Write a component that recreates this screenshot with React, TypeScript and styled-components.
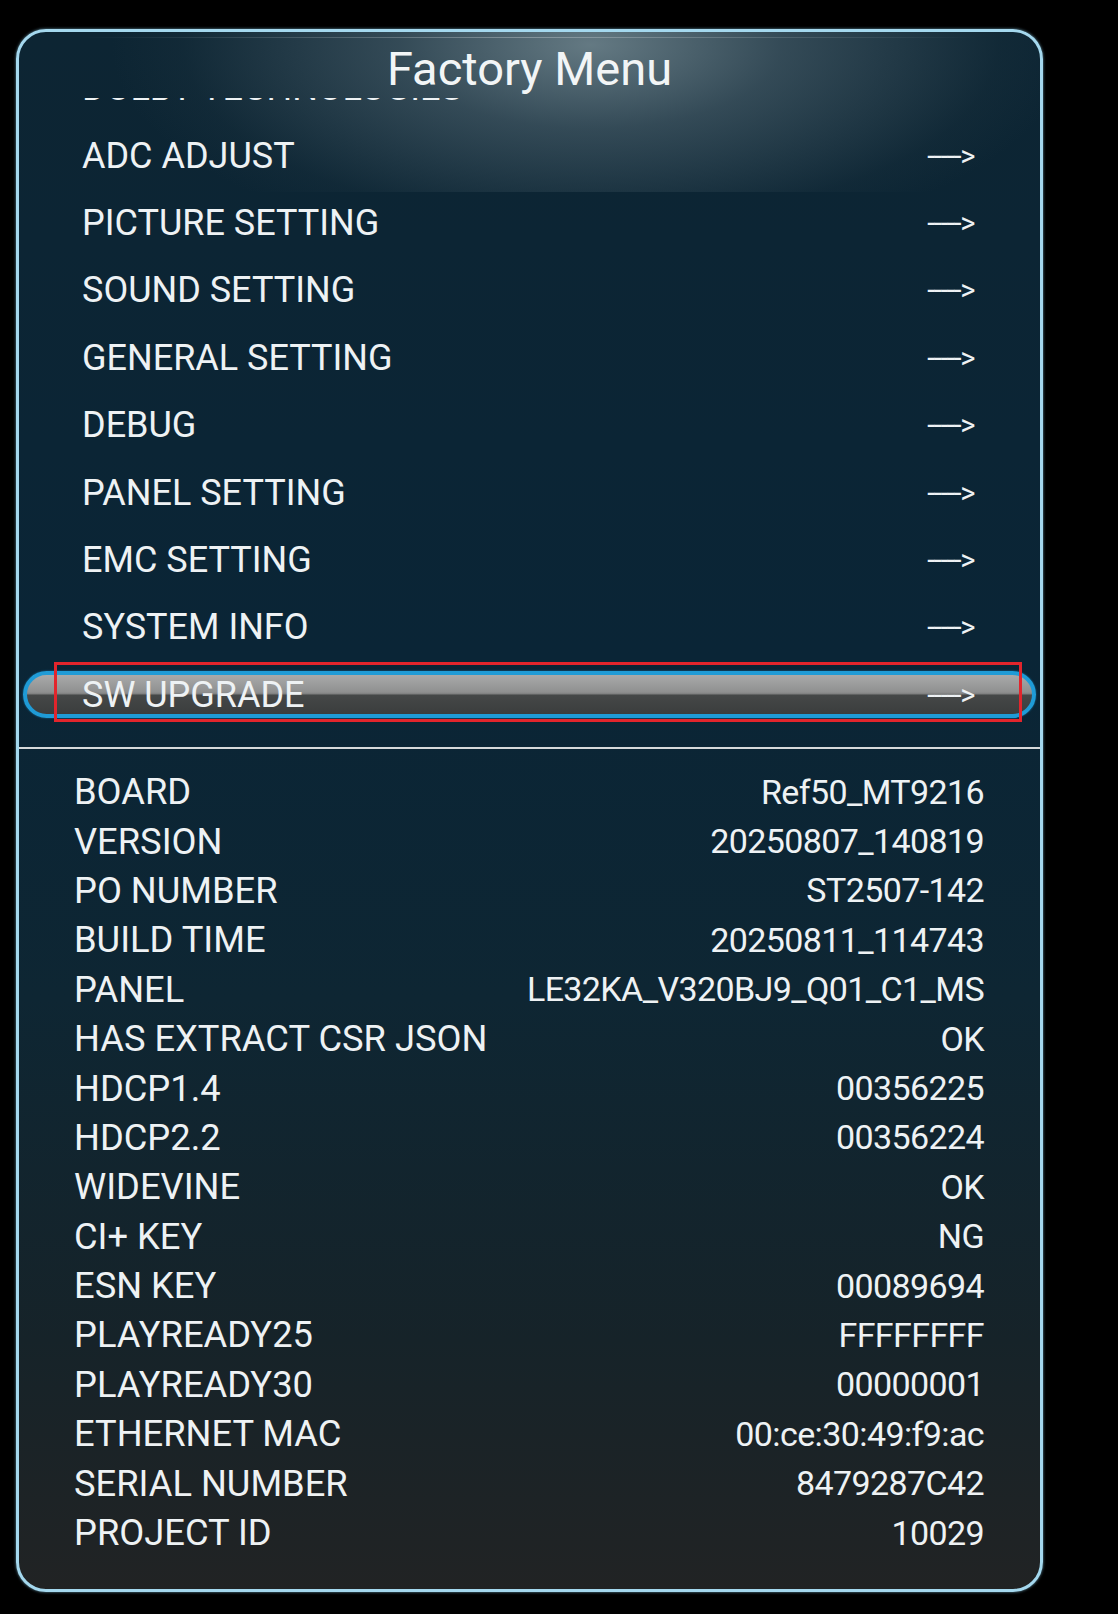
import React from 'react';
import styled, { createGlobalStyle } from 'styled-components';

const GlobalStyle = createGlobalStyle`
  html, body { margin: 0; padding: 0; background: #000; }
  body { font-family: Roboto, "Noto Sans", "Liberation Sans", sans-serif; }
`;

const Page = styled.div`
  width: 1118px;
  height: 1614px;
  box-sizing: border-box;
  padding: 29px 0 0 16px;
  background: #000;
`;

const Panel = styled.div`
  width: 1027px;
  height: 1563px;
  box-sizing: border-box;
  border: 3px solid #a4d8ee;
  border-radius: 30px;
  box-shadow: 0 0 3px rgba(140, 210, 240, 0.7);
  display: flex;
  flex-direction: column;
  overflow: hidden;
  background:
    linear-gradient(90deg, rgba(180,195,200,0) 6%, rgba(190,200,205,0.45) 50%, rgba(180,195,200,0) 94%) 0 5px / 100% 1px no-repeat,
    radial-gradient(ellipse 480px 210px at 56% 8%, rgba(145,165,172,0.66) 0%, rgba(110,130,140,0.4) 40%, rgba(60,80,90,0.1) 85%, rgba(60,80,90,0) 100%) 0 0 / 100% 160px no-repeat,
    linear-gradient(180deg, #0d2533 0%, #0a2536 40%, #0e2633 62%, #162329 84%, #212324 100%);
`;

const Header = styled.div`
  height: 66px;
  box-sizing: border-box;
  padding-top: 13px;
  text-align: center;
  flex-shrink: 0;
`;

const Title = styled.h1`
  margin: 0;
  font-size: 47px;
  line-height: 47px;
  font-weight: 400;
  color: #f2f5f6;
`;

const MenuViewport = styled.div`
  height: 649px;
  overflow: hidden;
  flex-shrink: 0;
`;

const MenuList = styled.div`
  margin-top: -43.6px;
  display: flex;
  flex-direction: column;
`;

const MenuRow = styled.div`
  position: relative;
  height: 67.43px;
  display: flex;
  align-items: center;
  padding: 0 4px;
`;

const Pill = styled.div<{ $selected?: boolean }>`
  flex: 1;
  height: 47px;
  box-sizing: border-box;
  border: 4px solid ${p => (p.$selected ? '#1f9bd6' : 'transparent')};
  border-radius: 24px;
  display: flex;
  align-items: center;
  justify-content: space-between;
  padding: 0 58px 0 55px;
  background: ${p =>
    p.$selected
      ? 'linear-gradient(180deg, #a9aaaa 0%, #8f9090 44%, #7c7d7d 49%, #454848 51%, #3b3d3d 100%)'
      : 'transparent'};
  box-shadow: ${p => (p.$selected ? '0 0 2px rgba(30,150,210,0.7)' : 'none')};
`;

const MenuLabel = styled.span`
  font-size: 36px;
  line-height: 40px;
  color: #eef2f4;
  white-space: nowrap;
`;

const Arrow = styled.span`
  font-size: 29px;
  line-height: 30px;
  color: #eef2f4;
  letter-spacing: -1.4px;
  white-space: nowrap;
`;

const RedFrame = styled.div`
  position: absolute;
  left: 35px;
  top: 1px;
  width: 968px;
  height: 60px;
  box-sizing: border-box;
  border: 3px solid #e2252c;
  pointer-events: none;
`;

const Separator = styled.div`
  height: 2px;
  background: #d6dadb;
  flex-shrink: 0;
`;

const InfoList = styled.div`
  padding: 18px 56px 0 55px;
  display: flex;
  flex-direction: column;
`;

const InfoRow = styled.div`
  height: 49.4px;
  display: flex;
  align-items: center;
  justify-content: space-between;
  color: #eef2f4;
  white-space: nowrap;
`;

const InfoLabel = styled.span`
  font-size: 36.3px;
`;

const InfoValue = styled.span`
  font-size: 34px;
  letter-spacing: -0.6px;
`;

const menuItems = [
  'DOLBY TECHNOLOGIES',
  'ADC ADJUST',
  'PICTURE SETTING',
  'SOUND SETTING',
  'GENERAL SETTING',
  'DEBUG',
  'PANEL SETTING',
  'EMC SETTING',
  'SYSTEM INFO',
  'SW UPGRADE',
];
const selectedIndex = 9;

const infoItems: [string, string][] = [
  ['BOARD', 'Ref50_MT9216'],
  ['VERSION', '20250807_140819'],
  ['PO NUMBER', 'ST2507-142'],
  ['BUILD TIME', '20250811_114743'],
  ['PANEL', 'LE32KA_V320BJ9_Q01_C1_MS'],
  ['HAS EXTRACT CSR JSON', 'OK'],
  ['HDCP1.4', '00356225'],
  ['HDCP2.2', '00356224'],
  ['WIDEVINE', 'OK'],
  ['CI+ KEY', 'NG'],
  ['ESN KEY', '00089694'],
  ['PLAYREADY25', 'FFFFFFFF'],
  ['PLAYREADY30', '00000001'],
  ['ETHERNET MAC', '00:ce:30:49:f9:ac'],
  ['SERIAL NUMBER', '8479287C42'],
  ['PROJECT ID', '10029'],
];

export default function App() {
  return (
    <Page>
      <GlobalStyle />
      <Panel>
        <Header>
          <Title>Factory Menu</Title>
        </Header>
        <MenuViewport>
          <MenuList>
            {menuItems.map((item, i) => (
              <MenuRow key={item}>
                <Pill $selected={i === selectedIndex}>
                  <MenuLabel>{item}</MenuLabel>
                  <Arrow>-----&gt;</Arrow>
                </Pill>
                {i === selectedIndex && <RedFrame />}
              </MenuRow>
            ))}
          </MenuList>
        </MenuViewport>
        <Separator />
        <InfoList>
          {infoItems.map(([k, v]) => (
            <InfoRow key={k}>
              <InfoLabel>{k}</InfoLabel>
              <InfoValue>{v}</InfoValue>
            </InfoRow>
          ))}
        </InfoList>
      </Panel>
    </Page>
  );
}
